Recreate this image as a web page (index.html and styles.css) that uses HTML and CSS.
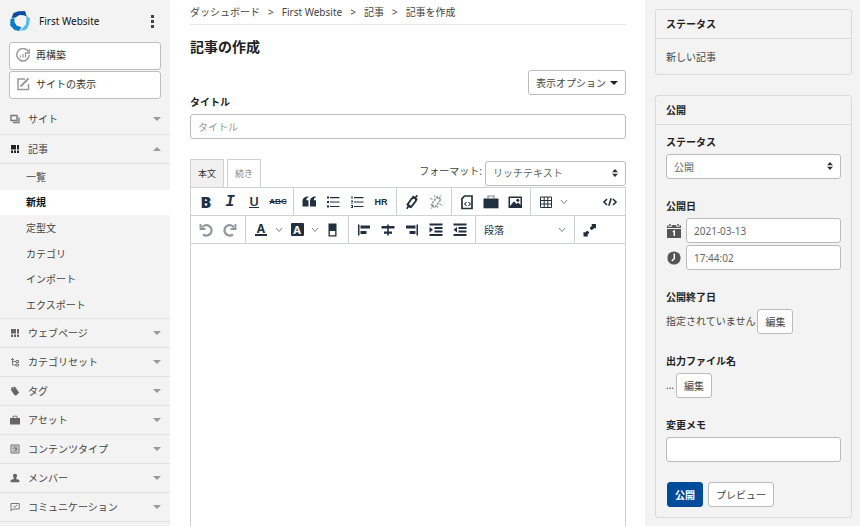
FILE: index.html
```html
<!DOCTYPE html>
<html lang="ja">
<head>
<meta charset="utf-8">
<title>記事の作成</title>
<link rel="stylesheet" href="styles.css">
</head>
<body>
<div class="app">
  <aside class="sidebar">
    <div class="brand">
      <svg class="logo" viewBox="0 0 22 22" aria-hidden="true">
        <path d="M4.500 3 9.500 1.200 16 1 17.800 6.500 14.500 5.300 10.500 5 6.500 7.500 2.500 8z" fill="#0a4f9f"/>
        <path d="M17.300 5.500 21 8.500 20 15 17 20 11 20.800 14 17.500 16.800 14.500 17.300 10.500z" fill="#5db9ee"/>
        <path d="M1.500 9 5.500 8 5.500 12 7.500 15.500 12.500 17.300 10 21 5.500 20 1.200 15.500z" fill="#0b7bc6"/>
      </svg>
      <span class="brand-name">First Website</span>
      <button class="kebab" aria-label="メニュー"><i></i><i></i><i></i></button>
    </div>
    <div class="site-actions">
      <a class="site-action" href="#">
        <svg viewBox="0 0 14 14" fill="none" stroke="#999" stroke-width="1.500" aria-hidden="true"><path d="M12.300 3.500A6.200 6.200 0 1 0 13.200 7"/><path d="M13.300 1v4h-4" stroke-width="1.300"/><path d="M4.500 9.500V7.500M7 9.500V6M9.500 9.500V4.500" stroke-width="1.200"/></svg>
        再構築</a>
      <a class="site-action" href="#">
        <svg viewBox="0 0 14 14" fill="none" stroke="#999" stroke-width="1.500" aria-hidden="true"><path d="M9 2H2v10.500h10.500V7"/><path d="M4.500 9.500 12.500 1.500" stroke-width="2"/></svg>
        サイトの表示</a>
    </div>
    <nav>
      <ul class="menu">
        <li><a class="menu-row" href="#"><svg viewBox="0 0 10 10" fill="none" stroke="#777" aria-hidden="true"><path d="M1 1.500h6v5H1z" stroke-width="1.400"/><path d="M3 8.500h6V3.500" stroke-width="1.400"/></svg>サイト<i class="arrow"></i></a></li>
        <li><a class="menu-row" href="#"><svg viewBox="0 0 10 10" fill="#222" aria-hidden="true"><path d="M1 1h5v4.500H1zM7 1h2v4.500H7zM1 6.500h2V9H1zM4 6.500h2V9H4zM7 6.500h2V9H7z"/></svg>記事<i class="arrow up"></i></a>
          <ul class="submenu">
            <li><a href="#">一覧</a></li>
            <li class="active"><a href="#" aria-current="page">新規</a></li>
            <li><a href="#">定型文</a></li>
            <li><a href="#">カテゴリ</a></li>
            <li><a href="#">インポート</a></li>
            <li><a href="#">エクスポート</a></li>
          </ul>
        </li>
        <li><a class="menu-row" href="#"><svg viewBox="0 0 10 10" fill="#666" aria-hidden="true"><path d="M1 1h5v4.500H1zM7 1h2v4.500H7zM1 6.500h2V9H1zM4 6.500h2V9H4zM7 6.500h2V9H7z"/></svg>ウェブページ<i class="arrow"></i></a></li>
        <li><a class="menu-row" href="#"><svg viewBox="0 0 10 10" fill="none" stroke="#777" aria-hidden="true"><path d="M2.500 1v7H6M1 2.500h3M2.500 4.500H6"/><path d="M6 3.500h2.500v2H6zM6 7h2.500v2H6z"/></svg>カテゴリセット<i class="arrow"></i></a></li>
        <li><a class="menu-row" href="#"><svg viewBox="0 0 10 10" fill="#666" aria-hidden="true"><path d="M1.500 1.500 5 .8l4.200 6L6.200 9.500 4.500 9.200 1 4z"/><path d="M3 2.200h.8v.8H3z" fill="#f3f3f3"/></svg>タグ<i class="arrow"></i></a></li>
        <li><a class="menu-row" href="#"><svg viewBox="0 0 10 10" fill="#666" aria-hidden="true"><path d="M0 3h10v6.500H0z"/><path d="M3 3V1.200h4V3" fill="none" stroke="#777"/></svg>アセット<i class="arrow"></i></a></li>
        <li><a class="menu-row" href="#"><svg viewBox="0 0 10 10" fill="#555" aria-hidden="true"><path d="M1 1h8v8H1z" fill="none" stroke="#666"/><path d="M2.500 2.500h5v1h-5zM2.500 4.300h2v1h-2zM5 4.300h2.500v1.500H5zM2.500 6.500h5v1h-5z"/></svg>コンテンツタイプ<i class="arrow"></i></a></li>
        <li><a class="menu-row" href="#"><svg viewBox="0 0 10 10" fill="#666" aria-hidden="true"><path d="M5 .8c1.500 0 2.200 1 2 2.300L6.300 5v1l3 1v2.200H.7V7l3-1V5L3 3.100C2.800 1.800 3.500.8 5 .8z"/></svg>メンバー<i class="arrow"></i></a></li>
        <li><a class="menu-row" href="#"><svg viewBox="0 0 10 10" fill="none" stroke="#777" aria-hidden="true"><path d="M1 1.500h8.200v5.500H3.200L1 8.800z"/><path d="m3.500 4 1.200 1.200 2.500-2.400"/></svg>コミュニケーション<i class="arrow"></i></a></li>
      </ul>
    </nav>
  </aside>

  <main class="content">
    <nav class="breadcrumb">
      <a href="#">ダッシュボード</a><span>&gt;</span><a href="#">First Website</a><span>&gt;</span><a href="#">記事</a><span>&gt;</span><a href="#">記事を作成</a>
    </nav>
    <h1>記事の作成</h1>
    <div class="options"><button class="btn">表示オプション<i class="caret"></i></button></div>
    <label class="label" for="title">タイトル</label>
    <input class="field" id="title" type="text" placeholder="タイトル">

    <div class="editor-head">
      <button class="tab current">本文</button>
      <button class="tab">続き</button>
      <label class="format-label" for="format">フォーマット:</label>
      <div class="select format">
        <select class="field" id="format"><option>リッチテキスト</option></select>
        <svg viewBox="0 0 6 8" aria-hidden="true"><path d="M3 0 6 3.200H0zM3 8 0 4.800h6z"/></svg>
      </div>
    </div>

    <div class="editor">
      <div class="toolbar">
        <div class="group">
          <button class="tool g-bold" aria-label="太字">B</button>
          <button class="tool g-italic" aria-label="斜体">I</button>
          <button class="tool g-under" aria-label="下線"><span>U</span></button>
          <button class="tool g-strike" aria-label="取り消し線">ABC</button>
        </div>
        <div class="group">
          <button class="tool" aria-label="引用"><svg viewBox="0 0 16 16"><path d="M7.300 3.200C5.800 3.700 5.300 5 5.300 6.200h2.200v6.300H1.500V7.500C1.500 4.500 3.500 2.500 7.300 2.500zM14.800 3.200c-1.500.5-2 1.800-2 3H15v6.300H9V7.500c0-3 2-5 5.800-5z"/></svg></button>
          <button class="tool" aria-label="箇条書き"><svg viewBox="0 0 16 16"><path d="M2 2.500h2v2H2zM2 7h2v2H2zM2 11.500h2v2H2zM5 3h9.500v1.200H5zM5 7.400h9.500v1.200H5zM5 11.900h9.500v1.200H5z"/></svg></button>
          <button class="tool" aria-label="番号付きリスト"><svg viewBox="0 0 16 16"><path d="M2.500 2h1v3h-1zM2 6.500h2v1L3 9h1v.6H2L3 7.500H2zM2 11h2v3H2v-1h1v-1H2zM5 3h9.500v1.200H5zM5 7.400h9.500v1.200H5zM5 11.900h9.500v1.200H5z"/></svg></button>
          <button class="tool g-hr" aria-label="水平線">HR</button>
        </div>
        <div class="group">
          <button class="tool" aria-label="リンク"><svg class="line" viewBox="0 0 16 16"><path d="M4.300 12V9.300L8 4.300l2.500-.8 1.300 1V7l-3.600 4.800-2.500.9z" stroke-width="1.900"/><path d="M11 4.300 13.300 1.300M5 11.800 2.700 14.700M8.500 2.200l4.800 4M2.700 9.800l4.800 4" stroke-width="1.600"/></svg></button>
          <button class="tool muted" aria-label="リンク解除"><svg class="line" viewBox="0 0 16 16"><path d="M4.300 12V9.300L8 4.300l2.500-.8 1.300 1V7l-3.600 4.800-2.500.9z" stroke-width="1.700" stroke-dasharray="2 1"/><path d="M11 4.300 13.300 1.300M5 11.800 2.700 14.700M2 4.500l3 1M6.500 1.500 7 4M11.500 10l3 1.500M9.500 12l.5 2.500M8.500 2.200l4.800 4M2.700 9.800l4.800 4" stroke-width="1.100" stroke-dasharray="2 .6"/></svg></button>
        </div>
        <div class="group">
          <button class="tool" aria-label="コード挿入"><svg class="line" viewBox="0 0 16 16"><path d="M5.500 2H13v12.500H3V4.700z" stroke-width="1.700"/><path d="m7.500 8-1.800 2 1.800 2M9.500 8l1.800 2-1.800 2" stroke-width="1.100"/></svg></button>
          <button class="tool" aria-label="アセット"><svg viewBox="0 0 16 16"><path d="M.5 4.500h15v9.800H.5z"/><path d="M5 4.500V2h6v2.500" fill="none" stroke="#7b838c" stroke-width="1.200"/></svg></button>
          <button class="tool" aria-label="画像"><svg viewBox="0 0 16 16"><path fill-rule="evenodd" d="M1.500 2.500h13.500v11.500H1.500zM3 4v8l4-4.700 2.500 2.700 1.700-1.500 2.300 2.500V4z"/><circle cx="10.800" cy="6.200" r="1.500"/></svg></button>
        </div>
        <div class="group last">
          <button class="tool" aria-label="表"><svg class="line" viewBox="0 0 16 16"><path d="M2.500 3h11v10.500h-11zM2.500 6.500h11M2.500 10h11M6.200 3v10.500M9.800 3v10.500"/></svg></button>
          <button class="tool chev" aria-label="表メニュー"><svg viewBox="0 0 8 8"><path d="m1 2 3 3.500L7 2"/></svg></button>
          <button class="tool end" aria-label="ソース"><svg class="line" viewBox="0 0 16 16"><path d="m5 5-3 3 3 3M11 5l3 3-3 3M9.200 4.300 6.800 11.700" stroke-width="1.600"/></svg></button>
        </div>
      </div>
      <div class="toolbar">
        <div class="group">
          <button class="tool muted" aria-label="元に戻す"><svg class="line" viewBox="0 0 16 16"><path d="M4 5.500A5.200 5.200 0 1 1 5 12.300" stroke-width="2.200"/><path d="M2.500 2v5H7.500" stroke-width="1.800"/></svg></button>
          <button class="tool muted" aria-label="やり直す"><svg class="line" viewBox="0 0 16 16"><path d="M12 5.500A5.200 5.200 0 1 0 11 12.300" stroke-width="2.200"/><path d="M13.500 2v5H8.500" stroke-width="1.800"/></svg></button>
        </div>
        <div class="group">
          <button class="tool g-color" aria-label="文字色"><span>A</span></button>
          <button class="tool chev" aria-label="文字色メニュー"><svg viewBox="0 0 8 8"><path d="m1 2 3 3.500L7 2"/></svg></button>
          <button class="tool g-back" aria-label="背景色"><span>A</span></button>
          <button class="tool chev" aria-label="背景色メニュー"><svg viewBox="0 0 8 8"><path d="m1 2 3 3.500L7 2"/></svg></button>
          <button class="tool" aria-label="書式解除"><svg viewBox="0 0 16 16"><path fill-rule="evenodd" d="M3.500 1.500h8V14.500h-8zM4.800 9v4.300h5.400V9z"/></svg></button>
        </div>
        <div class="group">
          <button class="tool" aria-label="左揃え"><svg viewBox="0 0 16 16"><path d="M2 2.500h1.500v11H2zM4.500 3.500H14v3H4.500zM4.500 9h6v3h-6z"/></svg></button>
          <button class="tool" aria-label="中央揃え"><svg viewBox="0 0 16 16"><path d="M7.200 2.500h1.600v11H7.200zM1.500 4h13v2.500h-13zM4 9.500h8v2.200H4z"/></svg></button>
          <button class="tool" aria-label="右揃え"><svg viewBox="0 0 16 16"><path d="M12.500 2.500H14v11h-1.500zM2 3.500h9.500v3H2zM5.500 9h6v3h-6z"/></svg></button>
          <button class="tool" aria-label="インデント"><svg viewBox="0 0 16 16"><path d="M1.500 1.500h13v2h-13zM6.500 5h8v2h-8zM6.500 8.500h8v2h-8zM1.500 12h13v2h-13zM1.500 5v5.500l3.500-2.700z"/></svg></button>
          <button class="tool" aria-label="インデント解除"><svg viewBox="0 0 16 16"><path d="M1.500 1.500h13v2h-13zM6.500 5h8v2h-8zM6.500 8.500h8v2h-8zM1.500 12h13v2h-13zM5 5v5.500L1.500 7.800z"/></svg></button>
        </div>
        <div class="group">
          <button class="style-picker">段落<svg viewBox="0 0 8 8"><path d="m1 2 3 3.500L7 2"/></svg></button>
        </div>
        <div class="group last">
          <button class="tool" aria-label="全画面"><svg viewBox="0 0 16 16"><path d="M9.500 2H14v4.500l-1.500-.5-2.800 2.300-2-2L10 3.500zM6 14.500H1.500V10L3 10.500l2.300-2 2 2L5.500 13z"/></svg></button>
        </div>
      </div>
      <div class="canvas" contenteditable="true" role="textbox" aria-label="本文"></div>
    </div>
  </main>

  <aside class="panel">
    <section class="card">
      <h2>ステータス</h2>
      <p>新しい記事</p>
    </section>
    <section class="card">
      <h2>公開</h2>
      <div class="card-body">
        <div class="item">
          <label class="label" for="status">ステータス</label>
          <div class="select">
            <select class="field" id="status"><option>公開</option></select>
            <svg viewBox="0 0 6 8" aria-hidden="true"><path d="M3 0 6 3.200H0zM3 8 0 4.800h6z"/></svg>
          </div>
        </div>
        <div class="item">
          <label class="label" for="date">公開日</label>
          <div class="date-row">
            <svg viewBox="0 0 14 14" aria-hidden="true"><path fill="#555" d="M0 5h14v9H0zM0 1.500h1.500V3h3V1.500h5V3h3V1.500H14V4H0z"/><path d="M2.200 0h1.500v2.300H2.200zM10.300 0h1.500v2.300h-1.500zM5.500 1h3v1h-3z" fill="#555"/><path d="m5.800 7.800 1.500-.9v5" fill="none" stroke="#fff" stroke-width="1.400"/></svg>
            <input class="field" id="date" type="text" value="2021-03-13">
          </div>
          <div class="date-row">
            <svg viewBox="0 0 14 14" aria-hidden="true"><circle cx="7" cy="7" r="6.600" fill="#555"/><path d="M7.300 2.500V7.500L4.800 10" fill="none" stroke="#fff" stroke-width="1.500"/></svg>
            <input class="field" type="text" value="17:44:02" aria-label="公開時刻">
          </div>
        </div>
        <div class="item">
          <h3 class="label">公開終了日</h3>
          <div class="inline"><span>指定されていません</span><button class="btn">編集</button></div>
        </div>
        <div class="item">
          <h3 class="label">出力ファイル名</h3>
          <div class="inline"><span>...</span><button class="btn">編集</button></div>
        </div>
        <div class="item">
          <label class="label" for="memo">変更メモ</label>
          <input class="field" id="memo" type="text">
        </div>
        <div class="actions"><button class="btn primary">公開</button><button class="btn">プレビュー</button></div>
      </div>
    </section>
  </aside>
</div>
</body>
</html>
```

FILE: styles.css
```css
* { box-sizing: border-box; }

body {
  margin: 0;
  background: #fff;
  color: #444;
  font: 10px/14px "Noto Sans", "Noto Sans CJK JP", sans-serif;
}

button, input, select { font: inherit; color: inherit; margin: 0; }
button { padding: 0; border: 0; background: none; }
a { color: inherit; text-decoration: none; }
ul { list-style: none; margin: 0; padding: 0; }
h1, h2, h3, p { margin: 0; }
svg { display: block; flex: none; }

.app {
  display: grid;
  grid-template-columns: 170px minmax(0, 1fr) 215px;
  height: 100vh;
  overflow: hidden;
}

/* Sidebar */
.sidebar { background: #f3f3f3; overflow: hidden; }
.brand {
  display: flex;
  align-items: center;
  height: 42px;
  padding: 0 12px 0 9px;
}
.logo { width: 22px; height: 22px; }
.brand-name { margin-left: 8px; color: #111; }
.kebab {
  display: flex;
  flex-direction: column;
  align-items: center;
  gap: 2px;
  width: 12px;
  margin-left: auto;
}
.kebab i { width: 3px; height: 3px; background: #444; }

.site-actions {
  display: flex;
  flex-direction: column;
  gap: 1px;
  padding: 0 9px;
}
.site-action {
  display: flex;
  align-items: center;
  gap: 6px;
  height: 28px;
  padding: 0 6px 2px;
  border: 1px solid #bfbfbf;
  border-radius: 3px;
  background: #fff;
  color: #333;
}
.site-action svg { width: 14px; height: 14px; }

.menu { margin-top: 6px; }
.menu > li { border-bottom: 1px solid #e2e2e2; }
.menu-row {
  display: flex;
  align-items: center;
  height: 29px;
  padding: 0 9px 1px 10px;
}
.menu > li + li > .menu-row { height: 28px; }
.menu-row svg { width: 10px; height: 10px; margin-right: 8px; }
.arrow {
  margin-left: auto;
  border: 4px solid transparent;
  border-top-color: #999;
  border-bottom: 0;
}
.arrow.up { border-top: 0; border-bottom: 4px solid #999; }

.submenu {
  display: grid;
  grid-auto-rows: 1fr;
  height: 155px;
  border-top: 1px solid #e2e2e2;
}
.submenu li { display: flex; align-items: center; padding-left: 26px; }
.submenu .active { background: #fff; color: #111; font-weight: 700; }

/* Main column */
.content {
  display: flex;
  flex-direction: column;
  min-height: 0;
  padding: 0 19px 0 20px;
}
.breadcrumb {
  display: flex;
  align-items: center;
  gap: 8px;
  height: 25px;
  border-bottom: 1px solid #e8e8e8;
}
h1 {
  margin: 12px 0 13px;
  color: #222;
  font-size: 14px;
  line-height: 20px;
}
.options { display: flex; justify-content: flex-end; }
.label {
  display: block;
  margin-bottom: 5px;
  color: #222;
  font-size: 10px;
  font-weight: 700;
  line-height: 14px;
}
.field {
  display: block;
  width: 100%;
  height: 25px;
  padding: 0 7px;
  border: 1px solid #bbb;
  border-radius: 3px;
  background: #fff;
  color: #666;
  appearance: none;
}
.field::placeholder { color: #959ba2; opacity: 1; }
.btn {
  height: 25px;
  padding: 0 7px;
  border: 1px solid #bbb;
  border-radius: 3px;
  background: #fff;
  white-space: nowrap;
}
.caret {
  display: inline-block;
  margin-left: 4px;
  border: 4px solid transparent;
  border-top-color: #222;
  border-bottom: 0;
  vertical-align: 2px;
}
.select { position: relative; }
.select svg {
  position: absolute;
  right: 8px;
  top: 8px;
  width: 6px;
  height: 8px;
  fill: #333;
  pointer-events: none;
}

.editor-head {
  display: flex;
  align-items: center;
  gap: 3px;
  height: 28px;
  margin-top: 20px;
}
.tab {
  align-self: stretch;
  width: 34px;
  border: 1px solid #ced2d5;
  border-bottom: 0;
  color: #888;
  font-size: 9px;
}
.tab.current { background: #f0f0f0; color: #333; }
.format-label { margin-left: auto; padding-bottom: 5px; }
.format { width: 141px; }

.editor {
  display: flex;
  flex: 1;
  flex-direction: column;
  border: 1px solid #d0d3d6;
  border-bottom: 0;
}
.toolbar {
  display: flex;
  height: 28px;
  border-bottom: 1px solid #d0d3d6;
}
.group {
  display: flex;
  align-items: center;
  padding: 0 3px;
  border-right: 1px solid #d0d3d6;
}
.group.last { flex: 1; border-right: 0; }
.tool {
  display: flex;
  align-items: center;
  justify-content: center;
  width: 24px;
  height: 24px;
  color: #222f3e;
}
.tool svg { width: 16px; height: 16px; fill: currentColor; }
.tool svg.line { fill: none; stroke: currentColor; }
.tool.muted { color: #8f969e; }
.tool.chev { width: 12px; }
.tool.chev svg, .style-picker svg {
  width: 8px;
  height: 8px;
  fill: none;
  stroke: #7a828b;
}
.tool.end { margin-left: auto; }
.g-bold { font: 900 16px/16px "Noto Sans", sans-serif; }
.g-italic { font: italic 700 16px/16px "Liberation Mono", monospace; }
.g-under span {
  width: 10px;
  border-bottom: 1px solid #222f3e;
  font: 600 13px/12px "Noto Sans", sans-serif;
}
.g-strike { font: 700 8px/10px "Liberation Sans", sans-serif; text-decoration: line-through; }
.g-hr { font: 700 9px/10px "Liberation Sans", sans-serif; }
.g-color span {
  width: 12px;
  border-bottom: 2px solid #222f3e;
  font: 700 12px/11px "Noto Sans", sans-serif;
}
.g-back span {
  width: 13px;
  border-radius: 1px;
  background: #222f3e;
  color: #fff;
  font: 700 11px/13px "Noto Sans", sans-serif;
}
.style-picker {
  display: flex;
  align-items: center;
  justify-content: space-between;
  width: 92px;
  height: 24px;
  padding: 0 5px;
  color: #222f3e;
}
.canvas { flex: 1; }

/* Right panel */
.panel {
  display: flex;
  flex-direction: column;
  gap: 20px;
  padding: 9px 8px 9px 10px;
  background: #f3f3f3;
}
.card { border: 1px solid #dadada; border-radius: 3px; }
.card h2 {
  padding: 7px 10px;
  border-bottom: 1px solid #dadada;
  color: #222;
  font-size: 10px;
  line-height: 14px;
}
.card p { padding: 11px 10px 10px; }
.card-body { padding: 10px; }
.item { margin-bottom: 20px; }
.date-row { display: flex; align-items: center; gap: 5px; }
.date-row + .date-row { margin-top: 2px; }
.date-row svg { width: 14px; height: 14px; margin-left: 1px; }
.inline { display: flex; align-items: center; gap: 2px; }
.inline span { padding-bottom: 2px; }
.actions { display: flex; gap: 5px; padding-left: 1px; }
.primary { border-color: #004c9b; background: #004c9b; color: #fff; font-weight: 700; }
```
